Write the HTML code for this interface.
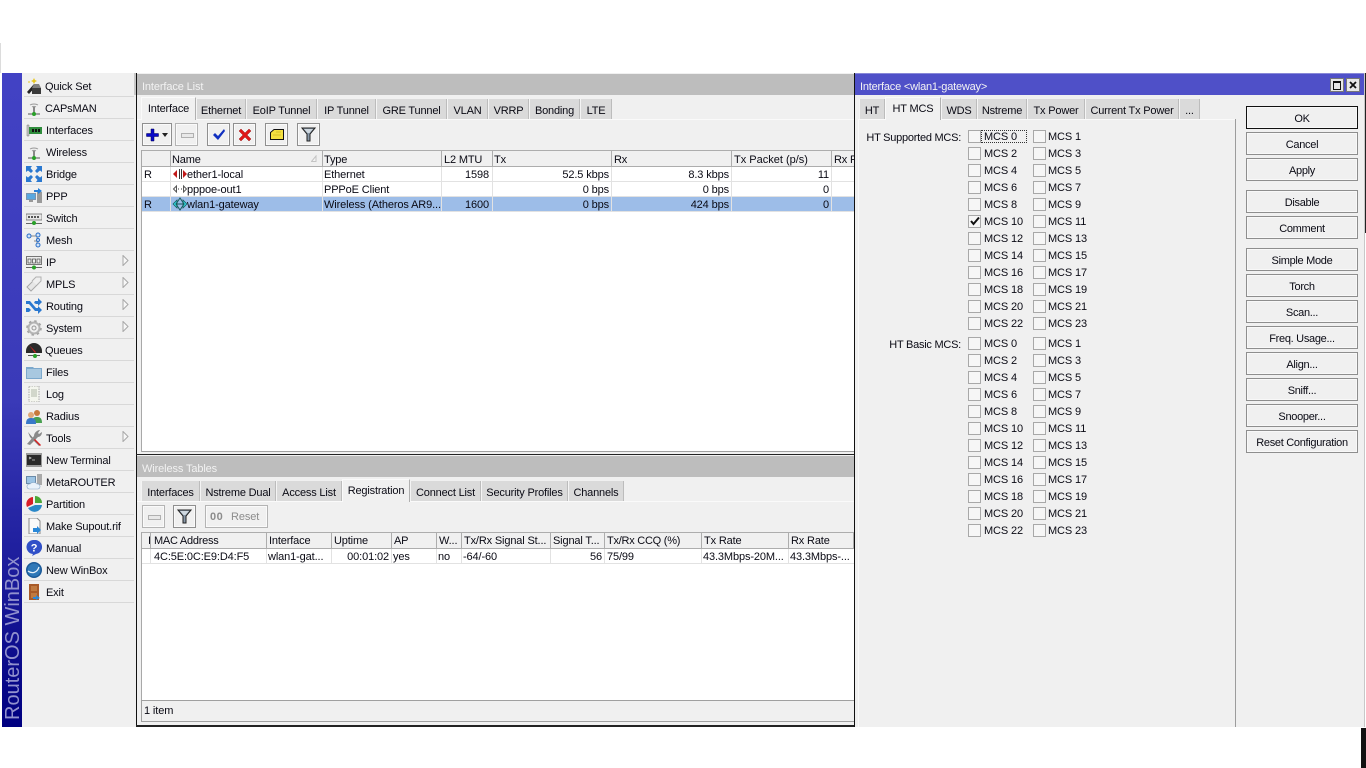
<!DOCTYPE html>
<html><head><meta charset="utf-8"><title>WinBox</title>
<style>
html,body{margin:0;padding:0;width:1366px;height:768px;overflow:hidden;background:#fff}
body{position:relative;font:11px/16px "Liberation Sans",sans-serif;color:#0a0a14;letter-spacing:-.12px}
div,span,i,svg{position:absolute;display:block}
.t{white-space:nowrap}
.r{white-space:nowrap;text-align:right}
.sep{left:24px;width:110px;height:1px;background:#d8d8d8}
.ic{left:26px;width:16px;height:16px}
.mt{left:46px;white-space:nowrap;letter-spacing:-.15px}
.ar{left:122px;width:7px;height:11px}
.tab{top:99px;height:20px;background:#dadada;border-left:1px solid #f4f4f4;border-right:1px solid #bcbcbc;box-sizing:border-box;text-align:center;line-height:24px;white-space:nowrap;letter-spacing:-.18px}
.act{top:97px;height:23px;background:#f0f0f0;border:1px solid #fafafa;border-right:1px solid #b0b0b0;border-bottom:0;box-sizing:border-box;text-align:center;line-height:22px;white-space:nowrap;z-index:2;letter-spacing:-.18px}
.tb{width:23px;height:23px;box-sizing:border-box;border:1px solid #8f8f8f;background:#f0f0f0;box-shadow:inset 0 0 0 1px #fafafa}
.dis{border-color:#b4b4b4}
.hd{background:#f0f0f0;box-sizing:border-box;border-top:1px solid #adadad;border-bottom:1px solid #adadad;border-right:1px solid #adadad;height:17px;line-height:17px;padding-left:2px;white-space:nowrap;overflow:hidden;letter-spacing:-.15px}
.up{line-height:19px}
.v{width:1px;background:#e2e2e2}
.h{height:1px;background:#e2e2e2}
.btn{left:1246px;width:112px;height:23px;box-sizing:border-box;border:1px solid #8e8e8e;background:#f0f0f0;text-align:center;line-height:24px;box-shadow:inset 0 0 0 1px #f8f8f8;letter-spacing:-.3px}
.grid{display:grid;grid-template-columns:65px 65px;grid-auto-rows:17px;width:130px}
.grid span{position:relative;padding-left:16px;line-height:16px;height:17px;box-sizing:border-box;white-space:nowrap}
.grid span:nth-child(even){padding-left:15px}
.grid span::before{content:"";position:absolute;left:0;top:1px;width:11px;height:11px;border:1px solid #a8a8a8;background:#f6f6f6}
</style></head><body>

<div style="left:0;top:43px;width:1px;height:30px;background:#dcdcdc"></div>

<!-- sidebar -->
<div style="left:2px;top:73px;width:20px;height:654px;background:linear-gradient(#4242c4 0%,#3a3ab8 50%,#000080 100%)"></div>
<div class="t" style="left:3px;top:558px;height:162px;width:20px;writing-mode:vertical-rl;transform:rotate(180deg);font-size:20px;line-height:20px;color:#9292ce;letter-spacing:0;text-align:left">RouterOS WinBox</div>
<div style="left:22px;top:73px;width:114px;height:654px;background:#f0f0f0"></div>
<div style="left:136px;top:73px;width:1px;height:654px;background:#111"></div>
<div style="left:134px;top:73px;width:2px;height:22px;background:#c8c8c8"></div>

<!-- menu text -->
<div class="mt" style="top:79px;left:45px">Quick Set</div>
<div class="mt" style="top:101px;left:45px">CAPsMAN</div>
<div class="mt" style="top:123px">Interfaces</div>
<div class="mt" style="top:145px">Wireless</div>
<div class="mt" style="top:167px">Bridge</div>
<div class="mt" style="top:189px">PPP</div>
<div class="mt" style="top:211px">Switch</div>
<div class="mt" style="top:233px">Mesh</div>
<div class="mt" style="top:255px">IP</div>
<div class="mt" style="top:277px">MPLS</div>
<div class="mt" style="top:299px">Routing</div>
<div class="mt" style="top:321px">System</div>
<div class="mt" style="top:343px;left:45px">Queues</div>
<div class="mt" style="top:365px">Files</div>
<div class="mt" style="top:387px">Log</div>
<div class="mt" style="top:409px">Radius</div>
<div class="mt" style="top:431px">Tools</div>
<div class="mt" style="top:453px">New Terminal</div>
<div class="mt" style="top:475px">MetaROUTER</div>
<div class="mt" style="top:497px">Partition</div>
<div class="mt" style="top:519px">Make Supout.rif</div>
<div class="mt" style="top:541px">Manual</div>
<div class="mt" style="top:563px">New WinBox</div>
<div class="mt" style="top:585px">Exit</div>

<!-- separators -->
<div class="sep" style="top:96px"></div><div class="sep" style="top:118px"></div><div class="sep" style="top:140px"></div><div class="sep" style="top:162px"></div><div class="sep" style="top:184px"></div><div class="sep" style="top:206px"></div><div class="sep" style="top:228px"></div><div class="sep" style="top:250px"></div><div class="sep" style="top:272px"></div><div class="sep" style="top:294px"></div><div class="sep" style="top:316px"></div><div class="sep" style="top:338px"></div><div class="sep" style="top:360px"></div><div class="sep" style="top:382px"></div><div class="sep" style="top:404px"></div><div class="sep" style="top:426px"></div><div class="sep" style="top:448px"></div><div class="sep" style="top:470px"></div><div class="sep" style="top:492px"></div><div class="sep" style="top:514px"></div><div class="sep" style="top:536px"></div><div class="sep" style="top:558px"></div><div class="sep" style="top:580px"></div><div class="sep" style="top:602px"></div>

<!-- submenu arrows -->
<svg class="ar" style="top:255px" viewBox="0 0 7 11"><path d="M1 .5V10.500L6 5.500Z" fill="#f8f8f8" stroke="#a8a8a8"/></svg>
<svg class="ar" style="top:277px" viewBox="0 0 7 11"><path d="M1 .5V10.500L6 5.500Z" fill="#f8f8f8" stroke="#a8a8a8"/></svg>
<svg class="ar" style="top:299px" viewBox="0 0 7 11"><path d="M1 .5V10.500L6 5.500Z" fill="#f8f8f8" stroke="#a8a8a8"/></svg>
<svg class="ar" style="top:321px" viewBox="0 0 7 11"><path d="M1 .5V10.500L6 5.500Z" fill="#f8f8f8" stroke="#a8a8a8"/></svg>
<svg class="ar" style="top:431px" viewBox="0 0 7 11"><path d="M1 .5V10.500L6 5.500Z" fill="#f8f8f8" stroke="#a8a8a8"/></svg>

<!-- menu icons -->
<svg class="ic" style="top:78px" viewBox="0 0 16 16"><path d="M1 14L8 6l2 2-7 8z" fill="#222"/><path d="M6 10h9v6H6z" fill="#3a3a3a"/><path d="M8 6l5 0 2 4H6z" fill="#808080"/><path d="M3 3l1 1-1 1-1-1zM8 0l1 2 2 1-2 1-1 2-1-2-2-1 2-1z" fill="#e8c820"/></svg>
<svg class="ic" style="top:100px" viewBox="0 0 16 16" fill="none"><path d="M4 5a6 4 0 0 1 8 0M6 7a3 2 0 0 1 4 0" stroke="#999"/><path d="M8 7v7" stroke="#666" stroke-width="1.500"/><path d="M2 14h12" stroke="#555"/><circle cx="8" cy="14" r="2" fill="#28a028"/></svg>
<svg class="ic" style="top:122px" viewBox="0 0 16 16"><path d="M1 3h2v11H1z" fill="#c8c8c8" stroke="#777" stroke-width=".5"/><path d="M3 5h13v7H3z" fill="#2f8c3c"/><path d="M6 7h2v3H6zM9 7h2v3H9zM12 7h2v3h-2z" fill="#111"/></svg>
<svg class="ic" style="top:144px" viewBox="0 0 16 16" fill="none"><path d="M4 5a6 4 0 0 1 8 0M6 7a3 2 0 0 1 4 0" stroke="#999"/><path d="M8 7v7" stroke="#666" stroke-width="1.500"/><path d="M2 14h12" stroke="#555"/><circle cx="8" cy="14" r="2" fill="#28a028"/></svg>
<svg class="ic" style="top:166px" viewBox="0 0 16 16"><path d="M0 0h6L4.500 2 7 5 5 7 2 4.500 0 6zM16 0v6l-2-1.500-3 2.500-2-2 2.500-3L10 0zM0 16v-6l2 1.500 3-2.500 2 2-2.500 3L6 16zM16 16h-6l1.500-2L9 11l2-2 3 2.500 2-1.500z" fill="#2a78d0"/></svg>
<svg class="ic" style="top:188px" viewBox="0 0 16 16"><path d="M0 5h10v7H0z" fill="#7a94b0"/><path d="M1 6h8v5H1z" fill="#5aa8e0"/><path d="M3 12h4v2H3z" fill="#999"/><path d="M11 4h5v11h-5z" fill="#999"/><path d="M8 2h4V0l4 3-4 3V4H8z" fill="#2a80d8"/></svg>
<svg class="ic" style="top:210px" viewBox="0 0 16 16"><path d="M0 4h16v6H0z" fill="#e8e8e8" stroke="#666" stroke-width=".7"/><path d="M2 6h2v2H2zM5 6h2v2H5zM8 6h2v2H8zM11 6h2v2h-2z" fill="#555"/><path d="M0 13h16v1H0z" fill="#666"/><circle cx="8" cy="13" r="2" fill="#28a028"/></svg>
<svg class="ic" style="top:232px" viewBox="0 0 16 16" fill="none"><path d="M4 4h7M11 5v8M8 9h3" stroke="#888"/><circle cx="3" cy="4" r="2" fill="#cfe2f8" stroke="#2a6ec8"/><circle cx="12" cy="3" r="2" fill="#cfe2f8" stroke="#2a6ec8"/><circle cx="12" cy="13" r="2" fill="#cfe2f8" stroke="#2a6ec8"/><circle cx="12" cy="8" r="1.500" fill="#cfe2f8" stroke="#2a6ec8"/></svg>
<svg class="ic" style="top:254px" viewBox="0 0 16 16"><path d="M.5 2.500h15v8H.5z" fill="#eee" stroke="#777"/><path d="M2 5h3v4H2zM6.500 5h3v4h-3zM11 5h3v4h-3z" fill="none" stroke="#555" stroke-width=".8"/><path d="M0 13h16v1H0z" fill="#666"/><circle cx="8" cy="13.500" r="2" fill="#28a028"/></svg>
<svg class="ic" style="top:276px" viewBox="0 0 16 16"><path d="M1 11l7-7 4 0 0 4-7 7z" fill="#e6e6e6" stroke="#a8a8a8"/><path d="M6 5l4-4 5 0 0 4-4 4" fill="#efefef" stroke="#b0b0b0"/></svg>
<svg class="ic" style="top:298px" viewBox="0 0 16 16"><path d="M0 3h4l6 7h2V8l4 4-4 4v-3H9L3 6H0zM0 10h3l2 2-2 2H0zM9 3h3V0l4 4-4 4V6h-2L8 5z" fill="#2a78d0"/></svg>
<svg class="ic" style="top:320px" viewBox="0 0 16 16" fill="none"><circle cx="8" cy="8" r="5.500" stroke="#b4b4b4" stroke-width="2"/><circle cx="8" cy="8" r="7" stroke="#a4a4a4" stroke-width="1.600" stroke-dasharray="2.500 3"/><circle cx="8" cy="8" r="2" stroke="#999"/></svg>
<svg class="ic" style="top:342px" viewBox="0 0 16 16"><path d="M0 9a8 8 0 0 1 16 0v2H0z" fill="#2a2a2a"/><path d="M2 13h12v1H2z" fill="#555"/><path d="M3 3l6 8 1-1z" fill="#d02020"/><circle cx="9" cy="14" r="2" fill="#28a028"/></svg>
<svg class="ic" style="top:364px" viewBox="0 0 16 16"><path d="M0 3h7l1 1h8v11H0z" fill="#7ca8cc"/><path d="M1 5h14v9H1z" fill="#a8c8e0"/></svg>
<svg class="ic" style="top:386px" viewBox="0 0 16 16"><path d="M3 0h10v16H3z" fill="#f4f6ee" stroke="#a8a8a8" stroke-dasharray="1.500 1"/><path d="M5 4h6M5 6h6M5 8h6M5 10h6" stroke="#b0b8a8"/></svg>
<svg class="ic" style="top:408px" viewBox="0 0 16 16"><circle cx="11" cy="5" r="3" fill="#c87a3c"/><path d="M6 15c0-5 2-6 5-6s5 1 5 6z" fill="#48a050"/><circle cx="5" cy="7" r="3" fill="#e0a878"/><path d="M0 16c0-5 2-6 5-6s5 1 5 6z" fill="#3878c8"/></svg>
<svg class="ic" style="top:430px" viewBox="0 0 16 16"><path d="M2 2l5 6 1 1 1 1 5 5-1 1-9-9z" fill="#808080"/><path d="M14 0l-2 3 1 1 3-2c0 3-2 5-4 5L4 15l-3-1L8 6c0-3 3-6 6-6z" fill="#8a8a8a"/><path d="M9 9l6 6-1 1-6-6z" fill="#d82020"/></svg>
<svg class="ic" style="top:452px" viewBox="0 0 16 16"><path d="M0 1h16v14H0z" fill="#999"/><path d="M1 3h14v10H1z" fill="#2a2a2a"/><path d="M3 5l2 1-2 1M6 8h3" stroke="#ccc" fill="none" stroke-width=".8"/></svg>
<svg class="ic" style="top:474px" viewBox="0 0 16 16"><path d="M0 2h10v8H0z" fill="#6a8aa8"/><path d="M1 3h8v6H1z" fill="#9cc4e4"/><path d="M11 0h5v11h-5z" fill="#aaa"/><path d="M3 15a2.500 2.500 0 0 1 1-5 4 3 0 0 1 7 0 2.500 2.500 0 0 1 1 5z" fill="#eaf2fa" stroke="#88a8c8" stroke-width=".6"/></svg>
<svg class="ic" style="top:496px" viewBox="0 0 16 16"><path d="M7 1v7L1 11A7 7 0 0 1 7 1z" fill="#d81e28"/><path d="M9 0a7 7 0 0 1 7 7H9z" fill="#4ca838"/><path d="M2 12l7-3h7a7.500 7.500 0 0 1-14 3z" fill="#2a88c8"/></svg>
<svg class="ic" style="top:518px" viewBox="0 0 16 16"><path d="M3 0h8l3 3v13H3z" fill="#fafafa" stroke="#8a8a8a"/><path d="M7 10h4V8l4 4-4 4v-2H7z" fill="#2a88d8"/></svg>
<svg class="ic" style="top:540px" viewBox="0 0 16 16"><path d="M8 0a7 7 0 0 1 2 14l-4 2 1-2A7 7 0 0 1 8 0z" fill="#3050c8"/><text x="8" y="11.500" font-size="11" font-weight="bold" font-family="Liberation Sans" fill="#fff" text-anchor="middle">?</text></svg>
<svg class="ic" style="top:562px" viewBox="0 0 16 16" fill="none"><circle cx="8" cy="8" r="8" fill="#1c5a98"/><circle cx="8" cy="8" r="6.500" fill="#2f78b8"/><path d="M2 9c4 3 9 2 11-4" stroke="#e8f2fa" stroke-width="1.200"/></svg>
<svg class="ic" style="top:584px" viewBox="0 0 16 16"><path d="M3 0h10v16H3z" fill="#a85a28"/><path d="M5 2h6v5H5zM5 9h6v5H5z" fill="#c07a40"/><path d="M7 13h3v-2l4 3-4 2v-1H7z" fill="#2a88d8"/></svg>

<!-- Interface List window -->
<div style="left:137px;top:73px;width:717px;height:654px;background:#f0f0f0"></div>
<div style="left:137px;top:74px;width:717px;height:21px;background:#bdbdbd"></div>
<div class="t" style="left:142px;top:79px;color:#f2f2f2">Interface List</div>
<div style="left:137px;top:119px;width:717px;height:1px;background:#fafafa"></div>

<div class="act" style="left:141px;width:55px">Interface</div>
<div class="tab" style="left:196px;width:50px">Ethernet</div>
<div class="tab" style="left:246px;width:71px">EoIP Tunnel</div>
<div class="tab" style="left:317px;width:59px">IP Tunnel</div>
<div class="tab" style="left:376px;width:71px">GRE Tunnel</div>
<div class="tab" style="left:447px;width:41px">VLAN</div>
<div class="tab" style="left:488px;width:41px">VRRP</div>
<div class="tab" style="left:529px;width:51px">Bonding</div>
<div class="tab" style="left:580px;width:32px">LTE</div>

<div class="tb" style="left:142px;top:123px;width:30px"><svg style="left:3px;top:4px;width:22px;height:14px" viewBox="0 0 22 14"><path d="M5 1h3v4.500h4.500v3H8V13H5V8.500H.5v-3H5z" fill="#0808c8" stroke="#000050" stroke-width=".5"/><path d="M16 5h6l-3 4z" fill="#222"/></svg></div>
<div class="tb dis" style="left:175px;top:123px"><div style="left:5px;top:9px;width:11px;height:3px;border:1px solid #b0b0b0;background:#e8e8e8"></div></div>
<div class="tb" style="left:207px;top:123px"><svg style="left:4px;top:4px;width:14px;height:14px" viewBox="0 0 14 14"><path d="M1 7l2-2 3 3 6-7 1 2-7 9z" fill="#1030c0"/></svg></div>
<div class="tb" style="left:233px;top:123px"><svg style="left:4px;top:4px;width:14px;height:14px" viewBox="0 0 14 14"><path d="M1 3l2-2 4 4 4-4 2 2-4 4 4 4-2 2-4-4-4 4-2-2 4-4z" fill="#e01818" stroke="#800" stroke-width=".4"/></svg></div>
<div class="tb" style="left:265px;top:123px"><svg style="left:4px;top:4px;width:14px;height:14px" viewBox="0 0 14 14"><path d="M.500 4.500L4 1.500h9.500v10H.500z" fill="#f4e040" stroke="#111"/><path d="M6 4h5M3 7h8" stroke="#b8a010" stroke-width=".6"/></svg></div>
<div class="tb" style="left:297px;top:123px"><svg style="left:3px;top:3px;width:15px;height:15px" viewBox="0 0 15 15"><path d="M1 1h13L9 7v7H6V7z" fill="#8898a8" stroke="#222"/><path d="M3 2h9L8.500 6h-2z" fill="#cfd8e0"/></svg></div>

<!-- interface table -->
<div style="left:141px;top:150px;width:713px;height:302px;background:#fff"></div>
<div style="left:141px;top:150px;width:1px;height:302px;background:#a8a8a8"></div>
<div style="left:142px;top:451px;width:712px;height:1px;background:#a0a0a0"></div>
<div style="left:142px;top:197px;width:712px;height:15px;background:#9dbde8"></div>
<div class="h" style="left:142px;top:181px;width:712px"></div>
<div class="h" style="left:142px;top:196px;width:712px"></div>
<div class="h" style="left:142px;top:211px;width:712px"></div>
<div class="v" style="left:170px;top:167px;height:45px"></div>
<div class="v" style="left:322px;top:167px;height:45px"></div>
<div class="v" style="left:441px;top:167px;height:45px"></div>
<div class="v" style="left:492px;top:167px;height:45px"></div>
<div class="v" style="left:611px;top:167px;height:45px"></div>
<div class="v" style="left:731px;top:167px;height:45px"></div>
<div class="v" style="left:831px;top:167px;height:45px"></div>

<div class="hd up" style="left:142px;top:150px;width:29px"></div>
<div class="hd up" style="left:171px;top:150px;width:152px;padding-left:1px">Name</div>
<svg style="left:311px;top:155px;width:7px;height:7px" viewBox="0 0 7 7"><path d="M.5 6.500L5 1v5.500z" fill="#f4f4f4" stroke="#c4c4c4"/></svg>
<div class="hd up" style="left:323px;top:150px;width:119px;padding-left:1px">Type</div>
<div class="hd up" style="left:442px;top:150px;width:51px">L2 MTU</div>
<div class="hd up" style="left:493px;top:150px;width:119px;padding-left:1px">Tx</div>
<div class="hd up" style="left:612px;top:150px;width:120px">Rx</div>
<div class="hd up" style="left:732px;top:150px;width:100px;letter-spacing:0">Tx Packet (p/s)</div>
<div class="hd up" style="left:832px;top:150px;width:22px;border-right:0">Rx P</div>

<div class="t" style="left:144px;top:167px">R</div>
<div class="t" style="left:144px;top:197px">R</div>
<svg style="left:172px;top:168px;width:16px;height:12px" viewBox="0 0 16 12"><path d="M1 6l4-4v8zM15 6l-4-4v8z" fill="#c01818"/><path d="M7 1h1v10H7zM9 1h1v10H9z" fill="#333"/></svg>
<svg style="left:172px;top:183px;width:16px;height:12px" viewBox="0 0 16 12" fill="#fff" stroke="#555"><path d="M1.500 6l3-3v6zM14.500 6l-3-3v6z"/><path d="M6 6h1M9 6h1" stroke="#333"/></svg>
<svg style="left:172px;top:197px;width:16px;height:14px" viewBox="0 0 16 14" fill="none"><path d="M1 7l4-4v8zM15 7l-4-4v8z" fill="#30d0d8" stroke="#185858" stroke-width=".7"/><path d="M8 1l4 6-4 6-4-6z" stroke="#185858"/><path d="M5 7h6" stroke="#185858"/></svg>
<div class="t" style="left:187px;top:167px">ether1-local</div>
<div class="t" style="left:187px;top:182px">pppoe-out1</div>
<div class="t" style="left:187px;top:197px">wlan1-gateway</div>
<div class="t" style="left:324px;top:167px">Ethernet</div>
<div class="t" style="left:324px;top:182px">PPPoE Client</div>
<div class="t" style="left:324px;top:197px">Wireless (Atheros AR9...</div>
<div class="r" style="left:442px;width:47px;top:167px">1598</div>
<div class="r" style="left:442px;width:47px;top:197px">1600</div>
<div class="r" style="left:493px;width:116px;top:167px">52.5 kbps</div>
<div class="r" style="left:493px;width:116px;top:182px">0 bps</div>
<div class="r" style="left:493px;width:116px;top:197px">0 bps</div>
<div class="r" style="left:612px;width:117px;top:167px">8.3 kbps</div>
<div class="r" style="left:612px;width:117px;top:182px">0 bps</div>
<div class="r" style="left:612px;width:117px;top:197px">424 bps</div>
<div class="r" style="left:732px;width:97px;top:167px">11</div>
<div class="r" style="left:732px;width:97px;top:182px">0</div>
<div class="r" style="left:732px;width:97px;top:197px">0</div>

<!-- Wireless Tables window -->
<div style="left:136px;top:454px;width:718px;height:1px;background:#222"></div>
<div style="left:137px;top:456px;width:717px;height:21px;background:#bdbdbd"></div>
<div class="t" style="left:142px;top:461px;color:#f2f2f2">Wireless Tables</div>
<div style="left:137px;top:501px;width:717px;height:1px;background:#fafafa"></div>

<div class="tab" style="left:141px;top:481px;width:59px">Interfaces</div>
<div class="tab" style="left:200px;top:481px;width:76px">Nstreme Dual</div>
<div class="tab" style="left:276px;top:481px;width:66px">Access List</div>
<div class="act" style="left:342px;top:479px;width:68px">Registration</div>
<div class="tab" style="left:410px;top:481px;width:71px">Connect List</div>
<div class="tab" style="left:481px;top:481px;width:87px">Security Profiles</div>
<div class="tab" style="left:568px;top:481px;width:56px">Channels</div>

<div class="tb dis" style="left:142px;top:505px"><div style="left:5px;top:9px;width:11px;height:3px;border:1px solid #b0b0b0;background:#e8e8e8"></div></div>
<div class="tb" style="left:173px;top:505px"><svg style="left:3px;top:3px;width:15px;height:15px" viewBox="0 0 15 15"><path d="M1 1h13L9 7v7H6V7z" fill="#8898a8" stroke="#222"/><path d="M3 2h9L8.500 6h-2z" fill="#cfd8e0"/></svg></div>
<div class="tb dis" style="left:205px;top:505px;width:63px"><div class="t" style="left:4px;top:3px;color:#8c8c8c;font-weight:bold;letter-spacing:.5px;font-size:11px">00</div><div class="t" style="left:25px;top:3px;color:#8c8c8c">Reset</div></div>

<!-- registration table -->
<div style="left:141px;top:532px;width:713px;height:169px;background:#fff"></div>
<div style="left:141px;top:532px;width:1px;height:169px;background:#a8a8a8"></div>
<div style="left:141px;top:700px;width:713px;height:1px;background:#a0a0a0"></div>
<div class="h" style="left:142px;top:563px;width:712px"></div>
<div class="v" style="left:150px;top:549px;height:15px"></div>
<div class="v" style="left:266px;top:549px;height:15px"></div>
<div class="v" style="left:331px;top:549px;height:15px"></div>
<div class="v" style="left:391px;top:549px;height:15px"></div>
<div class="v" style="left:436px;top:549px;height:15px"></div>
<div class="v" style="left:461px;top:549px;height:15px"></div>
<div class="v" style="left:550px;top:549px;height:15px"></div>
<div class="v" style="left:604px;top:549px;height:15px"></div>
<div class="v" style="left:701px;top:549px;height:15px"></div>
<div class="v" style="left:788px;top:549px;height:15px"></div>

<div class="hd" style="left:142px;top:532px;width:9px;height:17px;padding-left:6px">I</div>
<div class="hd" style="left:151px;top:532px;width:116px;padding-left:3px;letter-spacing:-.25px">MAC Address</div>
<div class="hd" style="left:267px;top:532px;width:65px">Interface</div>
<div class="hd" style="left:332px;top:532px;width:60px">Uptime</div>
<div class="hd" style="left:392px;top:532px;width:45px">AP</div>
<div class="hd" style="left:437px;top:532px;width:25px">W...</div>
<div class="hd" style="left:462px;top:532px;width:89px">Tx/Rx Signal St...</div>
<div class="hd" style="left:551px;top:532px;width:54px">Signal T...</div>
<div class="hd" style="left:605px;top:532px;width:97px;letter-spacing:-.25px">Tx/Rx CCQ (%)</div>
<div class="hd" style="left:702px;top:532px;width:87px">Tx Rate</div>
<div class="hd" style="left:789px;top:532px;width:65px">Rx Rate</div>

<div class="t" style="left:154px;top:549px">4C:5E:0C:E9:D4:F5</div>
<div class="t" style="left:268px;top:549px">wlan1-gat...</div>
<div class="r" style="left:332px;width:57px;top:549px">00:01:02</div>
<div class="t" style="left:393px;top:549px">yes</div>
<div class="t" style="left:438px;top:549px">no</div>
<div class="t" style="left:463px;top:549px">-64/-60</div>
<div class="r" style="left:551px;width:51px;top:549px">56</div>
<div class="t" style="left:607px;top:549px">75/99</div>
<div class="t" style="left:703px;top:549px">43.3Mbps-20M...</div>
<div class="t" style="left:790px;top:549px">43.3Mbps-...</div>

<div class="t" style="left:144px;top:703px">1 item</div>
<div style="left:141px;top:701px;width:1px;height:21px;background:#a0a0a0"></div>
<div style="left:141px;top:721px;width:713px;height:1px;background:#a0a0a0"></div>
<div style="left:136px;top:725px;width:718px;height:2px;background:#222"></div>

<!-- Right window -->
<div style="left:854px;top:73px;width:1px;height:654px;background:#111"></div>
<div style="left:855px;top:73px;width:509px;height:654px;background:#f0f0f0"></div>
<div style="left:855px;top:73px;width:509px;height:1px;background:#8888d8"></div>
<div style="left:855px;top:74px;width:509px;height:21px;background:#4f50c8"></div>
<div style="left:1364px;top:73px;width:1px;height:654px;background:#c8c8c8"></div>
<div style="left:1365px;top:73px;width:1px;height:160px;background:#222"></div>
<div class="t" style="left:860px;top:79px;color:#f4f4f4;letter-spacing:-.2px">Interface &lt;wlan1-gateway&gt;</div>
<div style="left:1330px;top:78px;width:14px;height:14px;box-sizing:border-box;border:1px solid #777;background:#e8e8e8"><div style="left:2px;top:2px;width:6px;height:6px;border:1px solid #111;border-top-width:2px"></div></div>
<div style="left:1346px;top:78px;width:14px;height:14px;box-sizing:border-box;border:1px solid #777;background:#e8e8e8"><svg style="left:2px;top:2px;width:8px;height:8px" viewBox="0 0 8 8"><path d="M1 1l6 6M7 1L1 7" stroke="#111" stroke-width="1.800"/></svg></div>

<div style="left:858px;top:119px;width:378px;height:1px;background:#fafafa"></div>
<div style="left:858px;top:119px;width:1px;height:608px;background:#fafafa"></div>
<div style="left:1235px;top:119px;width:1px;height:608px;background:#9c9c9c"></div>

<div class="tab" style="left:859px;width:26px">HT</div>
<div class="act" style="left:885px;width:56px">HT MCS</div>
<div class="tab" style="left:941px;width:36px">WDS</div>
<div class="tab" style="left:977px;width:50px">Nstreme</div>
<div class="tab" style="left:1027px;width:58px">Tx Power</div>
<div class="tab" style="left:1085px;width:94px">Current Tx Power</div>
<div class="tab" style="left:1179px;width:21px">...</div>

<div class="r" style="left:849px;width:112px;top:130px;letter-spacing:-.25px">HT Supported MCS:</div>
<div class="grid" style="left:968px;top:129px">
<span>MCS 0</span><span>MCS 1</span><span>MCS 2</span><span>MCS 3</span><span>MCS 4</span><span>MCS 5</span><span>MCS 6</span><span>MCS 7</span><span>MCS 8</span><span>MCS 9</span><span>MCS 10</span><span>MCS 11</span><span>MCS 12</span><span>MCS 13</span><span>MCS 14</span><span>MCS 15</span><span>MCS 16</span><span>MCS 17</span><span>MCS 18</span><span>MCS 19</span><span>MCS 20</span><span>MCS 21</span><span>MCS 22</span><span>MCS 23</span>
</div>
<div style="left:981px;top:130px;width:46px;height:13px;border:1px dotted #333;box-sizing:border-box"></div>
<svg style="left:970px;top:216px;width:10px;height:10px" viewBox="0 0 10 10"><path d="M1 5l2.500 3L9 1.500" fill="none" stroke="#111" stroke-width="2"/></svg>

<div class="r" style="left:849px;width:112px;top:337px;letter-spacing:-.25px">HT Basic MCS:</div>
<div class="grid" style="left:968px;top:336px">
<span>MCS 0</span><span>MCS 1</span><span>MCS 2</span><span>MCS 3</span><span>MCS 4</span><span>MCS 5</span><span>MCS 6</span><span>MCS 7</span><span>MCS 8</span><span>MCS 9</span><span>MCS 10</span><span>MCS 11</span><span>MCS 12</span><span>MCS 13</span><span>MCS 14</span><span>MCS 15</span><span>MCS 16</span><span>MCS 17</span><span>MCS 18</span><span>MCS 19</span><span>MCS 20</span><span>MCS 21</span><span>MCS 22</span><span>MCS 23</span>
</div>

<div class="btn" style="top:106px;border-color:#111">OK</div>
<div class="btn" style="top:132px">Cancel</div>
<div class="btn" style="top:158px">Apply</div>
<div class="btn" style="top:190px">Disable</div>
<div class="btn" style="top:216px">Comment</div>
<div class="btn" style="top:248px">Simple Mode</div>
<div class="btn" style="top:274px">Torch</div>
<div class="btn" style="top:300px">Scan...</div>
<div class="btn" style="top:326px">Freq. Usage...</div>
<div class="btn" style="top:352px">Align...</div>
<div class="btn" style="top:378px">Sniff...</div>
<div class="btn" style="top:404px">Snooper...</div>
<div class="btn" style="top:430px">Reset Configuration</div>

<div style="left:1361px;top:728px;width:5px;height:40px;background:#111"></div>
</body></html>
